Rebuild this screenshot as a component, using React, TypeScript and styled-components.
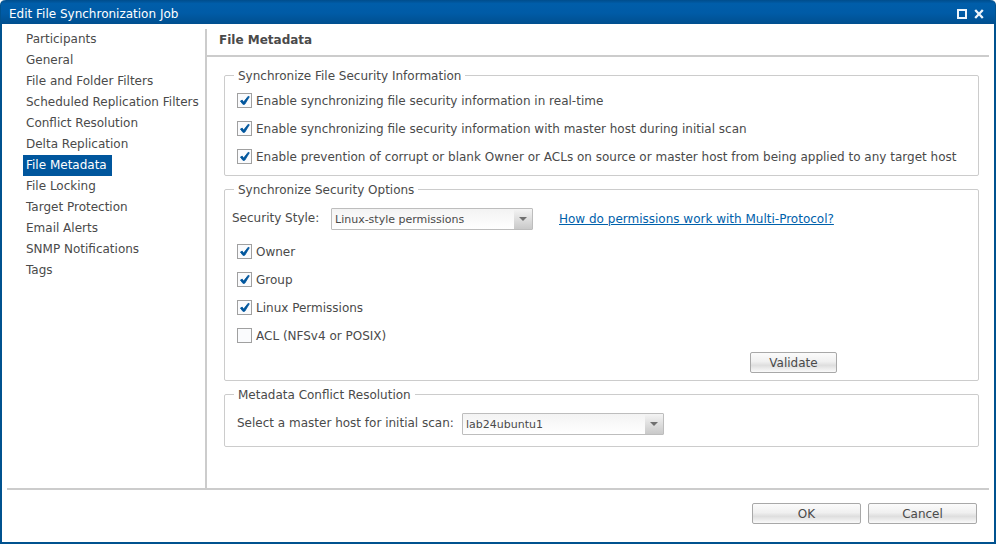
import React, { useId, useState } from "react";
import styled, { createGlobalStyle } from "styled-components";

const GlobalStyle = createGlobalStyle`
  * { box-sizing: border-box; }
  body { margin: 0; background: #fff; }
  body, button, select, input {
    font-family: "DejaVu Sans", Verdana, sans-serif;
    font-size: 12px;
    color: #4a4a4a;
  }
`;

const Dialog = styled.div`
  display: flex;
  flex-direction: column;
  min-height: 100vh;
  background: #fff;
  border: 2px solid #00528f;
  border-top: 0;
  border-radius: 5px 5px 0 0;
`;

const TitleBar = styled.header`
  display: flex;
  align-items: center;
  gap: 7px;
  height: 24px;
  padding: 3px 11px 0 8px;
  margin: 0 -1px;
  color: #fff;
  background: linear-gradient(#004d8c, #005eaa 15%, #005ba6 55%, #004f8f);
  border-radius: 5px 5px 0 0;
`;

const Title = styled.h1`
  flex: 1;
  margin: 0;
  font-size: 12px;
  font-weight: normal;
  line-height: 16px;
`;

const IconButton = styled.button`
  display: flex;
  padding: 0;
  border: 0;
  background: none;
  color: #eef5fb;
  cursor: pointer;
`;

const Main = styled.div`
  display: flex;
  flex: 1;
  margin: 0 5px;
  padding-top: 5px;
  border-bottom: 2px solid #ccc;
`;

const Nav = styled.nav`
  display: flex;
  flex-direction: column;
  align-items: flex-start;
  flex: 0 0 198px;
  padding-left: 16px;
`;

const NavLink = styled.a<{ $active: boolean }>`
  padding: 0 5px 0 3px;
  font-size: 12px;
  line-height: 21px;
  white-space: nowrap;
  text-decoration: none;
  color: ${(p) => (p.$active ? "#fff" : "#4a4a4a")};
  background: ${(p) => (p.$active ? "#00569d" : "transparent")};
`;

const Page = styled.main`
  flex: 1;
  min-width: 0;
  border-left: 2px solid #ccc;
`;

const PageTitle = styled.h2`
  margin: 0;
  padding: 2px 12px 6px;
  font-size: 12px;
  font-weight: bold;
  line-height: 18px;
  border-bottom: 2px solid #ccc;
`;

const Sections = styled.div`
  display: flex;
  flex-direction: column;
  gap: 5px;
  padding: 10px 10px 11px 17px;
`;

const Group = styled.fieldset`
  min-width: 0;
  margin: 0;
  padding: 9px 0 11px 9px;
  border: 1px solid #ccc;
  border-radius: 2px;
`;

const Legend = styled.legend`
  padding: 2px 4px 0;
  line-height: 15px;
`;

const CheckList = styled.div`
  display: flex;
  flex-direction: column;
  gap: 13px;
  padding-left: 3px;
`;

const CheckLabel = styled.label`
  display: flex;
  align-items: center;
  gap: 4px;
`;

const CheckText = styled.span`
  padding-top: 2px;
  line-height: 13px;
`;

const CheckFrame = styled.span`
  display: grid;
  flex: none;
  width: 15px;
  height: 15px;
`;

const CheckBox = styled.input`
  grid-area: 1 / 1;
  appearance: none;
  width: 15px;
  height: 15px;
  margin: 0;
  border: 1px solid #a0a0a0;
  background: #fafbfd;
`;

const CheckMark = styled.svg`
  grid-area: 1 / 1;
  pointer-events: none;
`;

const Field = styled.div<{ $indent?: boolean }>`
  display: flex;
  align-items: center;
  padding-top: 1px;
  margin-left: ${(p) => (p.$indent ? "3px" : "-2px")};
`;

const FieldLabel = styled.label<{ $wide?: boolean }>`
  flex: 0 0 ${(p) => (p.$wide ? "225px" : "99px")};
  padding-bottom: 2px;
  line-height: 18px;
  white-space: nowrap;
`;

const SelectFrame = styled.span`
  display: grid;
  flex: none;
  width: 202px;
`;

const Select = styled.select`
  grid-area: 1 / 1;
  appearance: none;
  height: 22px;
  padding: 0 20px 0 3px;
  font-size: 11px;
  border: 1px solid #bdbdbd;
  border-radius: 1px;
  background:
    linear-gradient(#f4f4f4, #c9c9c9) right / 18px 100% no-repeat,
    linear-gradient(#f3f3f3, #fff);
`;

const SelectArrow = styled.svg`
  grid-area: 1 / 1;
  align-self: center;
  justify-self: end;
  margin-right: 6px;
  pointer-events: none;
`;

const HelpLink = styled.a`
  margin-left: 26px;
  line-height: 18px;
  color: #0061ab;
`;

const Button = styled.button<{ $small?: boolean }>`
  width: ${(p) => (p.$small ? "87px" : "109px")};
  height: 21px;
  padding: 0;
  border: 1px solid #a8a8a8;
  border-radius: 2px;
  background: linear-gradient(#fbfbfb, #f0f0f0 45%, #dedede 65%, #fafafa);
`;

const Actions = styled.div`
  display: flex;
  justify-content: flex-end;
  padding: 9px 141px 0 0;
  margin-bottom: -4px;
`;

const Options = styled.div`
  padding-top: 14px;
`;

const Footer = styled.footer`
  display: flex;
  justify-content: flex-end;
  gap: 7px;
  padding: 13px 17px 18px;
`;

const pages = [
  "Participants",
  "General",
  "File and Folder Filters",
  "Scheduled Replication Filters",
  "Conflict Resolution",
  "Delta Replication",
  "File Metadata",
  "File Locking",
  "Target Protection",
  "Email Alerts",
  "SNMP Notifications",
  "Tags",
];

function Check({ label, initial = true }: { label: string; initial?: boolean }) {
  const [checked, setChecked] = useState(initial);
  return (
    <CheckLabel>
      <CheckFrame>
        <CheckBox type="checkbox" checked={checked} onChange={(e) => setChecked(e.target.checked)} />
        {checked && (
          <CheckMark width="15" height="15" viewBox="0 0 15 15" aria-hidden="true">
            <path d="M3.4 8.1 5.2 7.1 6.6 9.1 11.2 3.3 12.3 3.8 7.8 11.2 6 11.4Z" fill="#00569d" stroke="#00569d" strokeWidth="0.8" strokeLinejoin="round" />
          </CheckMark>
        )}
      </CheckFrame>
      <CheckText>{label}</CheckText>
    </CheckLabel>
  );
}

function Dropdown({ label, options, wide }: { label: string; options: string[]; wide?: boolean }) {
  const id = useId();
  return (
    <>
      <FieldLabel htmlFor={id} $wide={wide}>{label}</FieldLabel>
      <SelectFrame>
        <Select id={id}>
          {options.map((o) => <option key={o}>{o}</option>)}
        </Select>
        <SelectArrow width="8" height="4" viewBox="0 0 8 4" aria-hidden="true">
          <path d="M0 0H8L4 4Z" fill="#707070" />
        </SelectArrow>
      </SelectFrame>
    </>
  );
}

export default function App() {
  const [page, setPage] = useState("File Metadata");
  return (
    <>
      <GlobalStyle />
      <Dialog role="dialog" aria-label="Edit File Synchronization Job">
        <TitleBar>
          <Title>Edit File Synchronization Job</Title>
          <IconButton aria-label="Maximize">
            <svg width="10" height="10" viewBox="0 0 10 10">
              <rect x="1" y="1" width="8" height="8" fill="none" stroke="currentColor" strokeWidth="2" />
            </svg>
          </IconButton>
          <IconButton aria-label="Close">
            <svg width="10" height="10" viewBox="0 0 10 10">
              <path d="M1.2 1 8.8 9M8.8 1 1.2 9" stroke="currentColor" strokeWidth="2.3" />
            </svg>
          </IconButton>
        </TitleBar>
        <Main>
          <Nav>
            {pages.map((name) => (
              <NavLink
                key={name}
                href="#"
                $active={name === page}
                aria-current={name === page ? "page" : undefined}
                onClick={() => setPage(name)}
              >
                {name}
              </NavLink>
            ))}
          </Nav>
          <Page>
            <PageTitle>File Metadata</PageTitle>
            <Sections>
              <Group>
                <Legend>Synchronize File Security Information</Legend>
                <CheckList>
                  <Check label="Enable synchronizing file security information in real-time" />
                  <Check label="Enable synchronizing file security information with master host during initial scan" />
                  <Check label="Enable prevention of corrupt or blank Owner or ACLs on source or master host from being applied to any target host" />
                </CheckList>
              </Group>
              <Group>
                <Legend>Synchronize Security Options</Legend>
                <Field>
                  <Dropdown label="Security Style:" options={["Linux-style permissions"]} />
                  <HelpLink href="#">How do permissions work with Multi-Protocol?</HelpLink>
                </Field>
                <Options>
                  <CheckList>
                    <Check label="Owner" />
                    <Check label="Group" />
                    <Check label="Linux Permissions" />
                    <Check label="ACL (NFSv4 or POSIX)" initial={false} />
                  </CheckList>
                </Options>
                <Actions>
                  <Button $small>Validate</Button>
                </Actions>
              </Group>
              <Group>
                <Legend>Metadata Conflict Resolution</Legend>
                <Field $indent>
                  <Dropdown wide label="Select a master host for initial scan:" options={["lab24ubuntu1"]} />
                </Field>
              </Group>
            </Sections>
          </Page>
        </Main>
        <Footer>
          <Button>OK</Button>
          <Button>Cancel</Button>
        </Footer>
      </Dialog>
    </>
  );
}
